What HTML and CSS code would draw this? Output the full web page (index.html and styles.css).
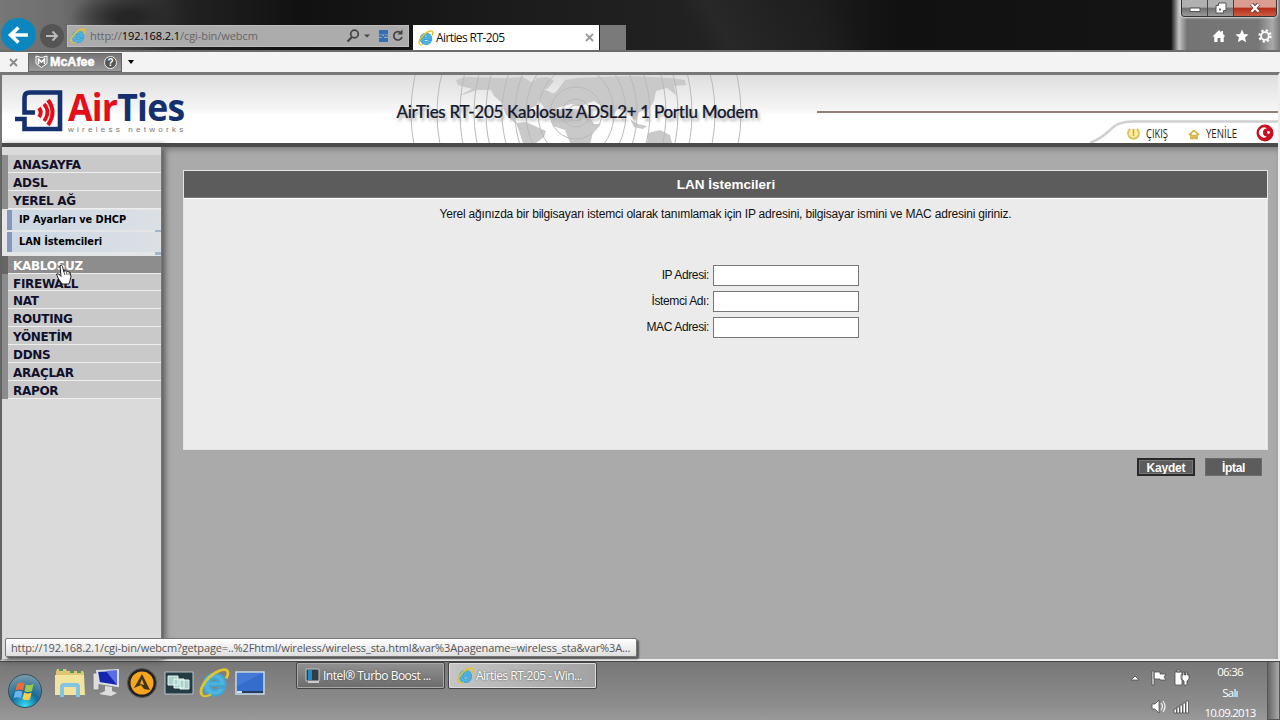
FILE: index.html
```
<!DOCTYPE html>
<html lang="tr">
<head>
    <meta charset="UTF-8">
    <meta name="viewport" content="width=device-width, initial-scale=1.0">
    <title>Airties RT-205</title>
    <link rel="stylesheet" href="styles.css">
</head>
<body>
    <!-- shared icons -->
    <svg class="defs" width="0" height="0">
        <symbol id="ie" viewBox="0 0 28 28">
            <path d="M24 16.500H10c.3 2.500 2 3.800 4.300 3.800 1.800 0 3-.6 3.900-1.800h5.300c-1.500 4.300-5 6.800-9.500 6.800C8 25.300 4 21.500 4 15.700S8 5.700 14 5.700c6.200 0 10.200 4.200 10 10.800zM10 12.800h8c-.4-1.900-1.900-2.900-4-2.900s-3.500 1.100-4 2.900z" fill="#4fb4e2" stroke="#3fa6d8" stroke-width="1.800"/>
            <path d="M3 25C-1 21 6 9 16 4c5-2.500 9-3 10 0 .5 2-.2 4-1.500 6" fill="none" stroke="#e2c52c" stroke-width="2.600"/>
            <path d="M3 25c2 2 5 1 8-.7" fill="none" stroke="#e2c52c" stroke-width="1.800"/>
        </symbol>
    </svg>

    <div class="window-top">
        <button class="nav-back"><svg width="34" height="34" viewBox="0 0 34 34"><path d="M27 17H10M17.500 9.500L9.500 17l8 7.500" fill="none" stroke="#fff" stroke-width="3.600"/></svg></button>
        <button class="nav-next"><svg width="22" height="22" viewBox="0 0 22 22"><path d="M5 11h11M11.500 6.500L16 11l-4.500 4.500" fill="none" stroke="#bbb" stroke-width="2"/></svg></button>
        <div class="address">
            <svg width="16" height="16"><use href="#ie"/></svg>
            <span class="url">http://<b>192.168.2.1</b>/cgi-bin/webcm</span>
            <svg width="62" height="20" viewBox="0 0 62 20" fill="none" stroke="#444">
                <circle cx="13.500" cy="8" r="3.800" stroke-width="1.700"/><path d="M11 11l-4.500 4.500" stroke-width="2.200"/>
                <path d="M23 8.500h6l-3 3z" fill="#444" stroke="none"/>
                <path d="M38 4h9v4.500h-9zM38 12h9v4h-9z" fill="#2f70b8" stroke="none"/><path d="M38 10.500l2-1 2 2 2-2 3 1" stroke="#2f70b8" stroke-width="1.700"/>
                <path d="M60.500 7.500A4.200 4.200 0 1 0 61 11" stroke-width="1.700"/><path d="M61.500 3.500v5h-5z" fill="#444" stroke="none"/>
            </svg>
        </div>
        <div class="tab">
            <svg width="16" height="16"><use href="#ie"/></svg>
            <span>Airties RT-205</span>
            <svg width="9" height="9" viewBox="0 0 9 9"><path d="M1 1l7 7M8 1L1 8" stroke="#999" stroke-width="1.800"/></svg>
        </div>
        <div class="new-tab"></div>
        <div class="glass">
            <div class="win-buttons">
                <span class="min"><svg width="12" height="6" viewBox="0 0 12 6"><path d="M1 1h10v3.500H1z" fill="#fff" stroke="#555"/></svg></span>
                <span class="max"><svg width="12" height="12" viewBox="0 0 12 12"><path d="M3.500 1h7.500v7.500H8.500V11H1V3.500h2.500z" fill="#fff" stroke="#555"/><path d="M4 6.500h2v2H4z" fill="#666"/></svg></span>
                <span class="close"><svg width="12" height="10" viewBox="0 0 12 10"><path d="M2.500 1l7 8M9.500 1l-7 8" stroke="#6b3530" stroke-width="4"/><path d="M2.500 1.200l7 7.600M9.500 1.200l-7 7.600" stroke="#fff" stroke-width="2.300"/></svg></span>
            </div>
            <svg class="tools" width="62" height="16" viewBox="0 0 62 16" fill="#fff">
                <path d="M8 2L1.500 8.500h1.800V14H6.500v-4h3v4h3.200V8.500h1.800L12 6V3h-1.800v1.500z"/>
                <path d="M31 1.500l1.900 4.500 4.600.4-3.500 3.200 1.100 4.700L31 11.800l-4.100 2.500 1.100-4.700-3.500-3.200 4.600-.4z"/>
                <g fill="none" stroke="#fff"><circle cx="54" cy="8" r="3.900" stroke-width="1.800"/><circle cx="54" cy="8" r="5.600" stroke-width="2.200" stroke-dasharray="2.200 2.200"/></g>
            </svg>
        </div>
    </div>

    <div class="toolbar">
        <svg width="9" height="9" viewBox="0 0 9 9"><path d="M1 1l7 7M8 1L1 8" stroke="#888" stroke-width="1.800"/></svg>
        <div class="mcafee">
            <svg width="13" height="14" viewBox="0 0 13 14"><path d="M1 1l5.500 1.500L12 1v7.500l-5.500 4L1 8.500z" fill="#777" stroke="#fff"/><path d="M3.500 9V4l3 3 3-3v5" fill="none" stroke="#fff" stroke-width="1.600"/></svg>
            <b>McAfee</b>
            <i>?</i>
        </div>
        <span class="caret"></span>
    </div>

    <div class="page">
        <header class="header">
            <div class="logo">
                <svg width="48" height="44" viewBox="0 0 48 44">
                    <path d="M9.500 21V8.500q0-5 5-5H45v36.500H9.500V30H0M9.500 21v2.500H20" fill="none" stroke="#15306e" stroke-width="4.600"/>
                    <path d="M24 19q3.500 4.500 0 9" fill="none" stroke="#e20d18" stroke-width="4"/><path d="M29 15q7 8 0 17" fill="none" stroke="#e20d18" stroke-width="3.600"/><path d="M33 11q9 12 0 25" fill="none" stroke="#e20d18" stroke-width="4"/>
                </svg>
                <div class="logo-text">
                    <div class="logo-name"><span>Air</span>Ties</div>
                    <div class="logo-sub">wireless networks</div>
                </div>
            </div>
            <div class="banner">
                <svg class="world" width="380" height="68" viewBox="0 0 380 68">
                    <g fill="#c9c9c9">
                        <path d="M58 5l9-3 38 1 20-1 8 5 10-4 6 4-5 6 10 5-4 6-9 1-3 6-8 3-6 8-7 1 2 6 9 5 3-1-5-4-9-1-9-8-5-13-7-6-3-6-14 0-18 6 13-7-14-4z"/>
                        <path d="M118 48l10-1 20 9-2 6-8 6h-13l-4-12zM137 3l13-1 6 4-7 8-6-1z"/>
                        <path d="M158 17l9-12 12-2 24-1 33-1 36 2 15 2 1 5-12 1 2 9-9-7-11 3-2 10-5 8-10 3-4 10-7-10-10-3-9 9-6-11-9-6-13 5-10-2-14 4-5 9-14-2 6-8-5-6 7-5z"/>
                        <path d="M154 38l11-5 22 2 9 14h7l-8 8-3 13h-19l-6-15-12-4-2-8zM250 58l12-3 10 5 2 8h-25zM232 44l8 5 9 2-4 3-9-2z"/>
                    </g>
                    <g fill="none" stroke="#bababa">
                        <circle cx="178" cy="38" r="8"/><circle cx="178" cy="38" r="14"/><circle cx="178" cy="38" r="26"/>
                        <ellipse cx="178" cy="38" rx="38" ry="46"/><ellipse cx="178" cy="38" rx="50" ry="62"/><ellipse cx="178" cy="38" rx="61" ry="80"/><ellipse cx="178" cy="38" rx="74" ry="94"/><ellipse cx="178" cy="38" rx="90" ry="115"/><ellipse cx="178" cy="38" rx="102" ry="125"/><ellipse cx="178" cy="38" rx="116" ry="140"/><ellipse cx="178" cy="38" rx="139" ry="150"/><ellipse cx="178" cy="38" rx="165" ry="170"/>
                    </g>
                </svg>
                <h1>AirTies RT-205 Kablosuz ADSL2+ 1 Portlu Modem</h1>
            </div>
            <div class="header-right">
                <div class="red-line"></div>
                <svg width="188" height="23" viewBox="0 0 188 23">
                    <path d="M0 23Q12 18 20 10 27 1.500 43 1.500H188" fill="none" stroke="#d0d0d0" stroke-width="2.600"/>
                    <path d="M40 9a5.500 5.500 0 1 0 7 0" fill="#fff0a8" stroke="#dec25c" stroke-width="2"/><path d="M43.500 9v7" stroke="#d9a92b" stroke-width="1.600"/>
                    <path d="M99 15l5-4.500 5 4.500M101 14v4.500h2v-3h2v3h2V14" fill="none" stroke="#d3a92d" stroke-width="1.500"/>
                    <g class="actions"><text x="56" y="18" textLength="22" lengthAdjust="spacingAndGlyphs">ÇIKIŞ</text><text x="116" y="18" textLength="31" lengthAdjust="spacingAndGlyphs">YENİLE</text></g>
                    <circle cx="175" cy="13" r="8.500" fill="#c9101e"/><path d="M177 8.500a5 5 0 1 0 0 8 4 4 0 1 1 0-8z" fill="#fff"/><circle cx="178.500" cy="12.500" r="1.400" fill="#fff"/>
                </svg>
            </div>
        </header>

        <div class="main">
            <nav class="menu">
                <a>ANASAYFA</a>
                <a>ADSL</a>
                <a>YEREL AĞ</a>
                <div class="submenu">
                    <a>IP Ayarları ve DHCP</a>
                    <a>LAN İstemcileri</a>
                </div>
                <a class="active">KABLOSUZ</a>
                <a>FIREWALL</a>
                <a>NAT</a>
                <a>ROUTING</a>
                <a>YÖNETİM</a>
                <a>DDNS</a>
                <a>ARAÇLAR</a>
                <a>RAPOR</a>
            </nav>
            <div class="content">
                <form class="panel">
                    <h2>LAN İstemcileri</h2>
                    <p>Yerel ağınızda bir bilgisayarı istemci olarak tanımlamak için IP adresini, bilgisayar ismini ve MAC adresini giriniz.</p>
                    <div class="fields">
                        <label for="ip">IP Adresi:</label><input id="ip" type="text">
                        <label for="host">İstemci Adı:</label><input id="host" type="text">
                        <label for="mac">MAC Adresi:</label><input id="mac" type="text">
                    </div>
                </form>
                <div class="buttons">
                    <button class="save">Kaydet</button>
                    <button>İptal</button>
                </div>
            </div>
        </div>
        <div class="status"><span>http://192.168.2.1/cgi-bin/webcm?getpage=..%2Fhtml/wireless/wireless_sta.html&amp;var%3Apagename=wireless_sta&amp;var%3A...</span></div>
        <svg class="cursor" width="17" height="22" viewBox="0 0 17 22"><path d="M4 1.500q2-1 2.500 1L8 8V6.500l2 .5 2 .5 2 1 1 4-1 4-1 3.500H6l-4-6-1.500-4L3 10l2 2.500z" fill="#fff" stroke="#222"/><path d="M8 8l.7 3M10.500 8l.5 3M13 8.700l.2 2.500" stroke="#333" stroke-width=".8"/></svg>
    </div>

    <div class="taskbar">
        <svg class="start" width="36" height="36" viewBox="0 0 36 36">
            <defs><radialGradient id="orb" cx=".5" cy=".95" r=".95"><stop offset="0" stop-color="#35dff5"/><stop offset=".45" stop-color="#14699a"/><stop offset="1" stop-color="#7e9eaa"/></radialGradient></defs>
            <circle cx="18" cy="18" r="16.500" fill="url(#orb)" stroke="#394c56"/>
            <path d="M10 11q4-2.500 7.500-.5l-1.500 7q-4-2-7.500.3z" fill="#ef6b35"/><path d="M19 11.500q4 1.500 7.500-.5L25 18q-4 2-7.500.2z" fill="#9acb4a"/><path d="M8 19q4-2.200 7.500-.2l-1.500 6.500q-3.500-2-7.500.2z" fill="#69b6ec"/><path d="M17 19.500q4 2 7.600 0L23 26.200q-3.500 2-7.500-.3z" fill="#fbd04b"/>
        </svg>
        <div class="pinned">
            <svg width="32" height="32" viewBox="0 0 32 32"><path d="M2 5l1-3h9l1 2h16l1 2v22H2z" fill="#dfc675"/><path d="M1 8h29l1 20H1z" fill="#f2e39f"/><path d="M5 3h4M16 5h4M23 5h4" stroke="#4b9a64" stroke-width="2"/><path d="M8 30V20q0-2 2-2h12q2 0 2 2v10" fill="none" stroke="#83c3e4" stroke-width="4"/></svg>
            <svg width="30" height="30" viewBox="0 0 30 30"><path d="M2 5h6v17H2z" fill="#ddd" stroke="#777"/><path d="M6 3l21-1v16l-19-3z" fill="#1425b0" stroke="#ddd" stroke-width="2"/><path d="M15 3l11-1v15z" fill="#5770e0"/><path d="M14 18l7 1v4l5 2-6 3-12-2 6-3z" fill="#ddd"/></svg>
            <svg width="32" height="32" viewBox="0 0 32 32"><circle cx="16" cy="16" r="14.500" fill="#222" stroke="#555"/><circle cx="16" cy="16" r="11.500" fill="#f6a51c"/><path d="M16 7l-8 14 7-3 3 4 6 1z" fill="#40351f"/><path d="M16 12l2 6-4-1z" fill="#f6a51c"/></svg>
            <svg width="30" height="24" viewBox="0 0 30 24"><path d="M1 1h28v22H1z" fill="#253b43" stroke="#b9c4c8"/><path d="M4 5h10v9H4zM10 8h10v9H10zM16 9h9v9h-9z" fill="#a9d2ca" stroke="#ecf7f4"/></svg>
            <svg class="ie-big" width="31" height="32"><use href="#ie"/></svg>
            <svg width="30" height="24" viewBox="0 0 30 24"><path d="M1 1h28v22H1z" fill="#356dcd" stroke="#ccd9e4" stroke-width="1.500"/><path d="M2 2h26L2 15z" fill="#4479d6"/><path d="M2 20h26v2H2z" fill="#263c5c"/><path d="M2 20h5v2H2z" fill="#d7e2e8"/></svg>
        </div>
        <div class="tasks">
            <div class="task"><svg width="16" height="16" viewBox="0 0 16 16"><path d="M1 1h13v12H1z" fill="#343c43" stroke="#c2c7ca"/><path d="M3 2h4v10H3z" fill="#218bc5"/><path d="M3 14h11" stroke="#ccc" stroke-width="2"/></svg><span>Intel® Turbo Boost ...</span></div>
            <div class="task current"><svg width="17" height="17"><use href="#ie"/></svg><span>Airties RT-205 - Win...</span></div>
        </div>
        <svg class="tray" width="60" height="50" viewBox="0 0 60 50" fill="#fff" stroke="#4b4b4b" stroke-width=".8">
            <path d="M1 12h8L5 8z"/>
            <path d="M22 3h2v14h-2zM24 4h6v2h6l-2 3 2 3h-6v-1h-6z"/>
            <path d="M45 4h7v13h-7zM47 2h3v2h-3zM51 7h2V4h1.500v3h1.500V4h1.500v3H59v4l-2 2v4h-3v-4l-3-2z"/>
            <path d="M22 36h3l4-4v13l-4-4h-3z"/><path d="M31 35q3 3.500 0 7M33 33q4 5.500 0 11" fill="none" stroke="#eee" stroke-width="1.200"/>
            <path d="M44 41h2.500v4H44zM47 39h2.500v6H47zM50 37h2.500v8H50zM53 35h2.500v10H53zM56 33h2.500v12H56z"/>
        </svg>
        <div class="clock"><span>06:36</span><span>Salı</span><span>10.09.2013</span></div>
        <div class="show-desktop"></div>
    </div>
</body>
</html>
```
FILE: styles.css
```
* {
    box-sizing: border-box;
}
body {
    margin: 0;
    width: 1280px;
    height: 720px;
    overflow: hidden;
    display: flex;
    flex-direction: column;
    font-family: "Liberation Sans", Arial, sans-serif;
    font-size: 12px;
    color: #111;
}
svg {
    display: block;
    flex: none;
}
.defs {
    position: absolute;
}
button {
    border: none;
    padding: 0;
}

/* browser window */
.window-top {
    height: 52px;
    flex: none;
    display: flex;
    align-items: flex-start;
    background:
        linear-gradient(60deg, transparent 0 54%, #282828 56%, #202020 62%, transparent 66%),
        radial-gradient(ellipse 60px 28px at 130px 18px, #262626 20%, transparent),
        linear-gradient(90deg, #777 0, #6e6e6e 60px, #505050 110px, #222 185px, #111 300px, #1c1c1c 520px, #242424 760px, #111 900px, #161616 1280px);
    border-bottom: 2px solid #6c6c6c;
}
.nav-back {
    width: 35px;
    height: 33px;
    margin: 18px 0 0 1px;
    border-radius: 50%;
    background: #0b86be;
}
.nav-next {
    width: 24px;
    height: 24px;
    margin: 24px 0 0 4px;
    padding-left: 1px;
    border-radius: 50%;
    background: #555;
}
.address {
    width: 342px;
    height: 22px;
    margin: 25px 0 0 3px;
    padding-left: 2px;
    display: flex;
    align-items: center;
    background: #acacac;
    border: 1px solid #bcbcbc;
}
.url {
    width: 255px;
    padding: 0 0 1px 4px;
    white-space: nowrap;
    font-family: "Open Sans", sans-serif;
    font-size: 11px;
    letter-spacing: -0.07px;
    color: #666;
}
.url b {
    font-weight: 400;
    color: #000;
}
.tab {
    width: 186px;
    height: 25px;
    margin: 25px 0 0 4px;
    padding: 0 5px;
    display: flex;
    align-items: center;
    background: #fff;
    font-family: "Open Sans", sans-serif;
    font-size: 12px;
}
.tab span {
    flex: 1;
    padding-left: 2px;
    letter-spacing: -0.6px;
}
.new-tab {
    width: 26px;
    height: 25px;
    margin: 25px 0 0 1px;
    background: #7a7a7a;
}
.glass {
    width: 109px;
    height: 50px;
    margin-left: auto;
    background: linear-gradient(90deg, transparent, #c4c4c4 8px, #747474 16px, #777 80%, #aaa 93%, #777);
}
.win-buttons {
    display: flex;
    width: 96px;
    height: 17px;
    margin-left: 10px;
    border: 1px solid #333;
    border-top: none;
    border-radius: 0 0 4px 4px;
    overflow: hidden;
    box-shadow: 0 0 2px 1px #ddd;
}
.win-buttons span {
    display: flex;
    align-items: center;
    justify-content: center;
    width: 26px;
    background: linear-gradient(#b0b0b0 45%, #707070 50%, #999);
    border-right: 1px solid #444;
}
.win-buttons .min {
    padding-top: 4px;
}
.win-buttons .close {
    flex: 1;
    border: none;
    background: linear-gradient(#d99d92 45%, #b52c17 50%, #ca5b42);
}
.tools {
    margin: 11px 0 0 40px;
}
.toolbar {
    height: 20px;
    flex: none;
    display: flex;
    align-items: center;
    padding-left: 9px;
    background: #f3f3f3;
}
.mcafee {
    width: 94px;
    height: 19px;
    margin-left: 10px;
    padding-left: 6px;
    display: flex;
    align-items: center;
    background: linear-gradient(#747474, #999);
    border: 1px solid #666;
    color: #fff;
}
.mcafee b {
    width: 56px;
    padding-left: 2px;
    font-size: 12.5px;
    -webkit-text-stroke: 0.5px #fff;
}
.mcafee i {
    width: 13px;
    height: 13px;
    border-radius: 50%;
    background: #555;
    border: 1px solid #eee;
    font: bold 10px/11px "Liberation Sans", sans-serif;
    text-align: center;
}
.caret {
    margin-left: 6px;
    border: 3.5px solid transparent;
    border-top: 4px solid #000;
    border-bottom: none;
}

/* modem page */
.page {
    position: relative;
    height: 589px;
    flex: none;
    display: flex;
    flex-direction: column;
    border-top: 3px solid #777;
    border-left: 2px solid #777;
    border-right: 2px solid #eee;
    border-bottom: 2px solid #eee;
    background: #aaa;
}
.header {
    height: 72px;
    flex: none;
    display: flex;
    background: linear-gradient(#dedede, #f5f5f5 34px, #fff 40px);
    border-bottom: 4px solid #4b4b4b;
}
.logo {
    display: flex;
    width: 172px;
    margin: 14px 0 0 13px;
}
.logo-text {
    margin-left: 5px;
    white-space: nowrap;
}
.logo-name {
    height: 34px;
    font: bold 38px/34px "Open Sans", sans-serif;
    letter-spacing: -0.8px;
    color: #15306e;
    transform: scaleX(0.935);
    transform-origin: left;
}
.logo-name span {
    color: #e60d1b;
}
.logo-sub {
    margin-top: 2px;
    font-size: 8px;
    line-height: 9px;
    letter-spacing: 3.25px;
    color: #777;
}
.banner {
    position: relative;
    width: 380px;
    margin-left: 202px;
    overflow: hidden;
}
.world {
    position: absolute;
    left: 9px;
    top: 0;
}
.banner h1 {
    position: relative;
    margin: 25px 0 0 7.5px;
    font: 500 17px/24px Lato, sans-serif;
    letter-spacing: -0.29px;
    white-space: nowrap;
    color: #15192f;
    -webkit-text-stroke: 0.2px #15192f;
    text-shadow: 2px 3px 3px #aaa;
}
.header-right {
    flex: 1;
    display: flex;
    flex-direction: column;
    justify-content: space-between;
    align-items: flex-end;
}
.red-line {
    width: 461px;
    height: 2px;
    margin-top: 36px;
    background: #947f7b;
}
.actions {
    font: 13px "Open Sans", sans-serif;
    fill: #222;
}
.main {
    flex: 1;
    display: flex;
}
.menu {
    width: 160px;
    padding-top: 8px;
    background: #dadada;
    border-right: 1px solid #777;
    box-shadow: 1px 0 7px 1px #444;
    font: bold 12px/20px "DejaVu Sans", Verdana, sans-serif;
    letter-spacing: -0.3px;
    color: #10102c;
}
.menu a {
    display: block;
    height: 17.88px;
    padding-left: 5px;
    border-left: 6px solid #8c8c8c;
    background: #c9c9c9;
    box-shadow: inset 0 -1px #eee;
}
.menu .active {
    color: #fff;
    background: #8d8d8d;
    border-left-color: #666;
}
.submenu {
    height: 47px;
    padding: 1px 0 0 5px;
    background: #e3e5e7;
}
.submenu a {
    height: 20px;
    margin-bottom: 2px;
    padding-left: 7px;
    border-left: 5px solid #8298bd;
    background: linear-gradient(90deg, #ccd7e3, #dce0e4);
    box-shadow: none;
    font-size: 9.8px;
    line-height: 20px;
    letter-spacing: -0.05px;
    color: #000;
}
/* small blue notch under each row */
.submenu a::after {
    content: "";
    display: block;
    width: 6px;
    height: 3px;
    margin-left: auto;
    background: #a3b6c9;
}
.content {
    flex: 1;
    padding: 23px 10px 0 21px;
    box-shadow: inset 0 5px 6px -3px #777;
}
.panel {
    height: 280px;
    border: 1px solid #e4e4e4;
    background: #ebebeb;
}
.panel h2 {
    margin: 0;
    padding-left: 1px;
    height: 27px;
    background: #5c5c5c;
    border-bottom: 1px solid #777;
    box-shadow: 0 1px #fff;
    font-size: 13.5px;
    line-height: 27px;
    text-align: center;
    color: #fff;
}
.panel p {
    margin: 8px 0 0;
    line-height: 16px;
    text-align: center;
    letter-spacing: -0.19px;
}
.fields {
    display: grid;
    grid-template-columns: 525px 146px;
    grid-auto-rows: 22px;
    gap: 4px 4px;
    margin-top: 42px;
    align-items: center;
}
.fields label {
    text-align: right;
    letter-spacing: -0.38px;
}
.fields input {
    width: 146px;
    height: 21px;
    border: 1px solid #777;
    background: #fff;
}
.buttons {
    display: flex;
    justify-content: flex-end;
    gap: 10px;
    margin: 8px 6px 0 0;
}
.buttons button {
    width: 57px;
    height: 18px;
    padding-top: 1px;
    overflow: hidden;
    background: #5c5c5c;
    border: 1px solid #6c6c6c;
    color: #fff;
    font: bold 12px/17px "Liberation Sans", sans-serif;
    letter-spacing: -0.3px;
}
.buttons .save {
    width: 58px;
    padding-top: 0;
    border: 2px solid #292929;
    box-shadow: inset 0 0 0 1px #777;
    letter-spacing: -0.2px;
}
.status {
    position: absolute;
    left: 3px;
    bottom: 2px;
    width: 632px;
    height: 19px;
    padding-left: 5px;
    white-space: nowrap;
    background: linear-gradient(#fff, #dedede);
    border: 1px solid #777;
    border-radius: 2px;
    box-shadow: 2px 2px 2px #555;
    font: 11px/17px "Open Sans", sans-serif;
    letter-spacing: -0.125px;
    color: #555;
}
.cursor {
    position: absolute;
    left: 54px;
    top: 189px;
}

/* taskbar */
.taskbar {
    height: 59px;
    flex: none;
    display: flex;
    align-items: flex-start;
    background: linear-gradient(#777, #8d8d8d 75%, #999);
    border-top: 1px solid #444;
    font-family: "Open Sans", sans-serif;
    font-size: 12px;
    color: #fff;
}
.start {
    margin: 11px 0 0 7px;
}
.pinned {
    width: 241px;
    display: flex;
    gap: 5.2px;
    align-items: center;
    margin: 5px 0 0 11px;
}
.tasks {
    display: flex;
    gap: 3px;
    margin-left: 1px;
}
.task {
    width: 149px;
    height: 27px;
    padding-left: 8px;
    display: flex;
    align-items: center;
    gap: 2px;
    white-space: nowrap;
    background: linear-gradient(#929292, #6b6b6b);
    border: 1px solid #444;
    box-shadow: inset 0 0 0 1px #a9a9a9;
    border-radius: 2px;
    text-shadow: 0 0 2px #444;
    letter-spacing: -0.52px;
}
.current {
    background: linear-gradient(90deg, #c5c5c5, #a2a2a2);
    box-shadow: inset 0 0 0 1px #ddd;
}
.tray {
    margin: 6px 0 0 auto;
}
.clock {
    width: 72px;
    margin-left: 4px;
    margin-right: 1px;
    display: flex;
    flex-direction: column;
    align-items: center;
    line-height: 20.5px;
    font-size: 11.5px;
    letter-spacing: -0.75px;
}
.show-desktop {
    width: 13px;
    height: 58px;
    background: linear-gradient(90deg, #666, #aaa);
    border: 1px solid #555;
    border-top: none;
}
```
